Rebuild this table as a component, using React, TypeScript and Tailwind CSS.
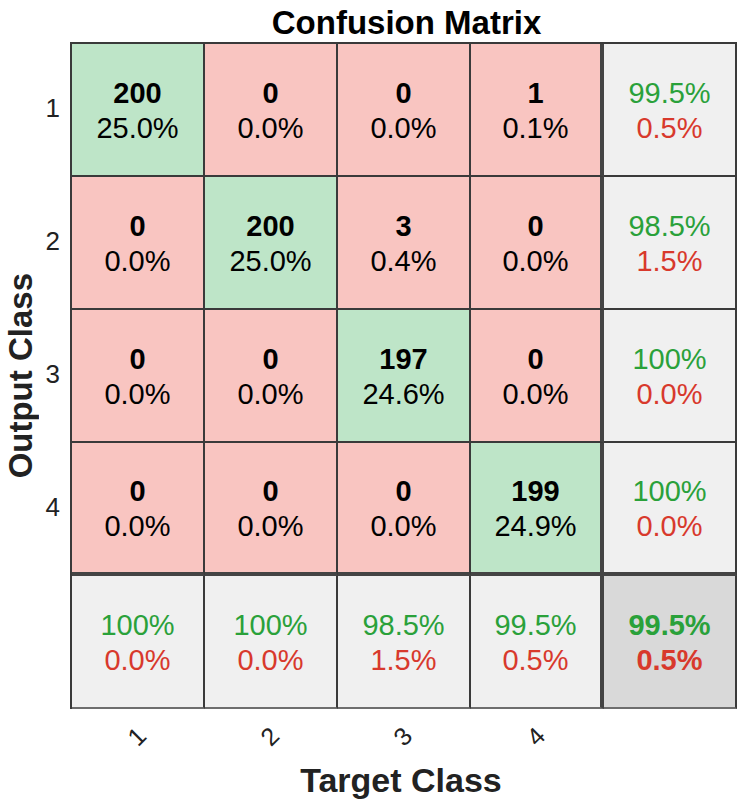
import React from "react";

type Cell = { n?: string; p?: string; good?: boolean; hit?: boolean };

const rows: { cells: Cell[]; acc: string; err: string }[] = [
  {
    cells: [
      { n: "200", p: "25.0%", hit: true },
      { n: "0", p: "0.0%" },
      { n: "0", p: "0.0%" },
      { n: "1", p: "0.1%" },
    ],
    acc: "99.5%",
    err: "0.5%",
  },
  {
    cells: [
      { n: "0", p: "0.0%" },
      { n: "200", p: "25.0%", hit: true },
      { n: "3", p: "0.4%" },
      { n: "0", p: "0.0%" },
    ],
    acc: "98.5%",
    err: "1.5%",
  },
  {
    cells: [
      { n: "0", p: "0.0%" },
      { n: "0", p: "0.0%" },
      { n: "197", p: "24.6%", hit: true },
      { n: "0", p: "0.0%" },
    ],
    acc: "100%",
    err: "0.0%",
  },
  {
    cells: [
      { n: "0", p: "0.0%" },
      { n: "0", p: "0.0%" },
      { n: "0", p: "0.0%" },
      { n: "199", p: "24.9%", hit: true },
    ],
    acc: "100%",
    err: "0.0%",
  },
];

const totals = [
  { acc: "100%", err: "0.0%" },
  { acc: "100%", err: "0.0%" },
  { acc: "98.5%", err: "1.5%" },
  { acc: "99.5%", err: "0.5%" },
];

// borders: right edge of column 4 and bottom of row 4 are the thick separators
function edge(r: number, c: number) {
  const right = c === 3 ? "border-r-4 border-r-[#444]" : "border-r-2 border-r-[#3a3a3a]";
  const bottom =
    r === 3 ? "border-b-4 border-b-[#444]" : r === 4 ? "border-b-2 border-b-[#6e6e6e]" : "border-b-2 border-b-[#3a3a3a]";
  return `${right} ${bottom}`;
}

function CountCell({ cell, r, c }: { cell: Cell; r: number; c: number }) {
  return (
    <div
      className={`h-[133px] flex flex-col items-center justify-center pt-[3px] text-black text-[29px] leading-[35px] ${
        cell.hit ? "bg-[#bee5c8]" : "bg-[#f9c5c1]"
      } ${edge(r, c)}`}
    >
      <span className="font-bold">{cell.n}</span>
      <span>{cell.p}</span>
    </div>
  );
}

function RateCell({ acc, err, r, c, total }: { acc: string; err: string; r: number; c: number; total?: boolean }) {
  return (
    <div
      className={`h-[133px] flex flex-col items-center justify-center pt-[3px] text-[29px] leading-[35px] ${
        total ? "bg-[#d9d9d9] font-bold" : "bg-[#f0f0f0]"
      } ${edge(r, c)}`}
    >
      <span className="text-[#2aa13a]">{acc}</span>
      <span className="text-[#d8392c]">{err}</span>
    </div>
  );
}

export default function App() {
  return (
    <div className="w-[744px] h-[804px] bg-white flex flex-col font-['Liberation_Sans',Arial,sans-serif] text-[#111]">
      {/* Title */}
      <div className="h-[42px] flex items-end justify-center pl-[74px] pr-[5px]">
        <span className="text-[33px] font-bold leading-none pb-[3px] text-black">Confusion Matrix</span>
      </div>

      <div className="flex">
        {/* y axis */}
        <div className="w-[70px] flex">
          <div className="w-[40px] flex items-center justify-center">
            <span className="[writing-mode:vertical-rl] rotate-180 text-[33px] font-bold leading-none text-[#222]">
              Output Class
            </span>
          </div>
          <div className="w-[30px] flex flex-col">
            {["1", "2", "3", "4", ""].map((l, i) => (
              <div key={i} className="h-[133px] flex items-center justify-end pr-[10px] text-[26px] text-[#222]">
                {l}
              </div>
            ))}
          </div>
        </div>

        {/* matrix */}
        <div className="w-[665px] grid grid-cols-5 border-t-2 border-l-2 border-[#3a3a3a] box-content">
          {rows.map((row, r) => (
            <React.Fragment key={r}>
              {row.cells.map((cell, c) => (
                <CountCell key={c} cell={cell} r={r} c={c} />
              ))}
              <RateCell acc={row.acc} err={row.err} r={r} c={4} />
            </React.Fragment>
          ))}
          {totals.map((t, c) => (
            <RateCell key={c} acc={t.acc} err={t.err} r={4} c={c} />
          ))}
          <RateCell acc="99.5%" err="0.5%" r={4} c={4} total />
        </div>
      </div>

      {/* x ticks */}
      <div className="flex pl-[70px]">
        {["1", "2", "3", "4", ""].map((l, i) => (
          <div key={i} className="w-[133px] h-[54px] flex items-center justify-center">
            <span className="inline-block -rotate-45 text-[25px] leading-none text-[#222]">{l}</span>
          </div>
        ))}
      </div>

      <div className="flex justify-center pl-[58px]">
        <span className="text-[34px] font-bold leading-none text-[#222]">Target Class</span>
      </div>
    </div>
  );
}
